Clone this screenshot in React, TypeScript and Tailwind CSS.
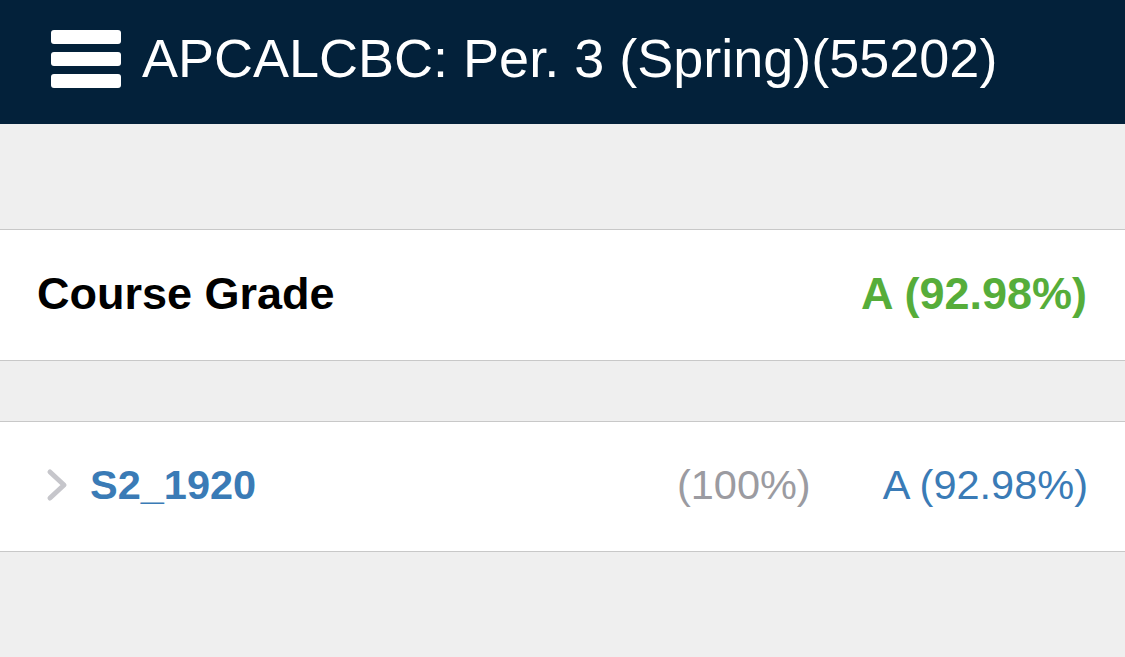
const font = "font-['Helvetica_Neue','Liberation_Sans',Arial,sans-serif]";

const App = () => {
  return (
    <main className={`w-[1125px] h-[657px] bg-[#efefef] overflow-hidden ${font}`}>
      <header className="h-[124px] bg-[#03213a] flex items-center pl-[51px] pb-[8px]">
        <div className="flex flex-col gap-[8px] w-[70px] mt-[2px]">
          <span className="block h-[14px] rounded-[3px] bg-white" />
          <span className="block h-[14px] rounded-[3px] bg-white" />
          <span className="block h-[14px] rounded-[3px] bg-white" />
        </div>
        <h1 className="ml-[21px] text-white text-[54px] leading-none whitespace-nowrap">
          APCALCBC: Per. 3 (Spring)(55202)
        </h1>
      </header>

      <div className="h-[105px]" />

      <section className="h-[132px] bg-white border-y border-[#c8c8c8] flex items-center justify-between pl-[37px] pr-[38px] pb-[4px]">
        <p className="text-[45px] font-bold text-black leading-none">Course Grade</p>
        <p className="text-[45px] font-bold text-[#56ad3a] leading-none">A (92.98%)</p>
      </section>

      <div className="h-[60px]" />

      <section className="h-[131px] bg-white border-y border-[#c8c8c8] flex items-center pl-[45px] pr-[37px] pb-[4px]">
        <svg width="26" height="34" viewBox="0 0 26 34" className="shrink-0">
          <path d="M5 4 L19 17 L5 30" fill="none" stroke="#c6c6cb" strokeWidth="5" strokeLinecap="round" strokeLinejoin="round" />
        </svg>
        <p className="ml-[19px] text-[41.5px] font-bold text-[#3a7bb6] leading-none">S2_1920</p>
        <p className="ml-auto text-[41.5px] text-[#9b9ba1] leading-none">(100%)</p>
        <p className="ml-[72px] text-[41.5px] text-[#3a7bb6] leading-none">A (92.98%)</p>
      </section>
    </main>
  );
};

export default App;
